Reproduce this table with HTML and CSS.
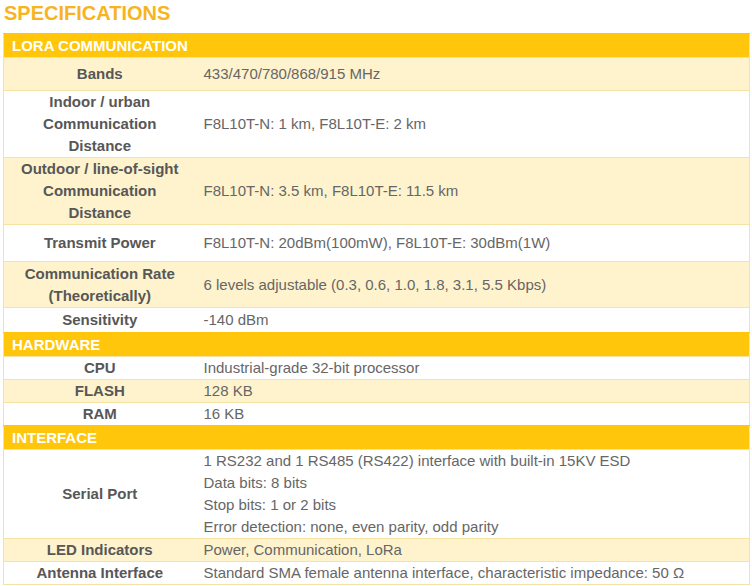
FILE: index.html
```html
<!DOCTYPE html>
<html>
<head>
<meta charset="utf-8">
<link rel="stylesheet" href="styles.css">
</head>
<body>
<h2 class="title">SPECIFICATIONS</h2>
<table class="spec">
  <colgroup><col class="c1"><col class="c2"></colgroup>
  <tr class="sec"><td colspan="2">LORA COMMUNICATION</td></tr>
  <tr class="alt p5"><th>Bands</th><td>433/470/780/868/915 MHz</td></tr>
  <tr><th>Indoor / urban<br>Communication<br>Distance</th><td>F8L10T-N: 1 km, F8L10T-E: 2 km</td></tr>
  <tr class="alt"><th>Outdoor / line-of-sight<br>Communication<br>Distance</th><td>F8L10T-N: 3.5 km, F8L10T-E: 11.5 km</td></tr>
  <tr class="p7"><th>Transmit Power</th><td>F8L10T-N: 20dBm(100mW), F8L10T-E: 30dBm(1W)</td></tr>
  <tr class="alt pt1"><th>Communication Rate<br>(Theoretically)</th><td>6 levels adjustable (0.3, 0.6, 1.0, 1.8, 3.1, 5.5 Kbps)</td></tr>
  <tr class="p1"><th>Sensitivity</th><td>-140 dBm</td></tr>
  <tr class="sec"><td colspan="2">HARDWARE</td></tr>
  <tr><th>CPU</th><td>Industrial-grade 32-bit processor</td></tr>
  <tr class="alt"><th>FLASH</th><td>128 KB</td></tr>
  <tr><th>RAM</th><td>16 KB</td></tr>
  <tr class="sec"><td colspan="2">INTERFACE</td></tr>
  <tr><th>Serial Port</th><td>1 RS232 and 1 RS485 (RS422) interface with built-in 15KV ESD<br>Data bits: 8 bits<br>Stop bits: 1 or 2 bits<br>Error detection: none, even parity, odd parity</td></tr>
  <tr class="alt"><th>LED Indicators</th><td>Power, Communication, LoRa</td></tr>
  <tr><th>Antenna Interface</th><td>Standard SMA female antenna interface, characteristic impedance: 50 Ω</td></tr>
</table>
</body>
</html>
```
FILE: styles.css
```css
html, body {
  margin: 0;
  padding: 0;
  background: #ffffff;
}
body {
  padding: 0 2px 0 3px;
  font-family: "Liberation Sans", Arial, sans-serif;
}
.title {
  margin: 0;
  padding: 1px 0 0 1px;
  height: 33px;
  box-sizing: border-box;
  font-size: 20px;
  line-height: 24px;
  font-weight: bold;
  color: #f7b41f;
}
.spec {
  width: 747px;
  border-collapse: collapse;
  border: 1px solid #f6e3a2;
  font-size: 15px;
  line-height: 22px;
  color: #666666;
}
.c1 { width: 192px; }
.spec th,
.spec td {
  padding: 0 0 0 8px;
  border-top: 1px solid #f6e3a2;
  text-align: left;
  vertical-align: middle;
}
.spec th {
  padding: 0;
  text-align: center;
  font-weight: bold;
  color: #575757;
}
.spec tr.sec td {
  background: #ffc60b;
  color: #ffffff;
  font-weight: bold;
  font-size: 15px;
  height: 23px;
  padding: 0 0 0 8px;
  border-top: 1px solid #ffc60b;
}
.spec tr.alt th,
.spec tr.alt td {
  background: #fef3cd;
}
.spec tr.p5 th, .spec tr.p5 td { padding-top: 5px; padding-bottom: 5px; }
.spec tr.p7 th, .spec tr.p7 td { padding-top: 7px; padding-bottom: 7px; }
.spec tr.p1 th, .spec tr.p1 td { padding-top: 1px; padding-bottom: 1px; }
.spec tr.pt1 th, .spec tr.pt1 td { padding-top: 1px; }
.spec tr.p5 td, .spec tr.p7 td, .spec tr.p1 td, .spec tr.pt1 td { padding-left: 8px; }
```
